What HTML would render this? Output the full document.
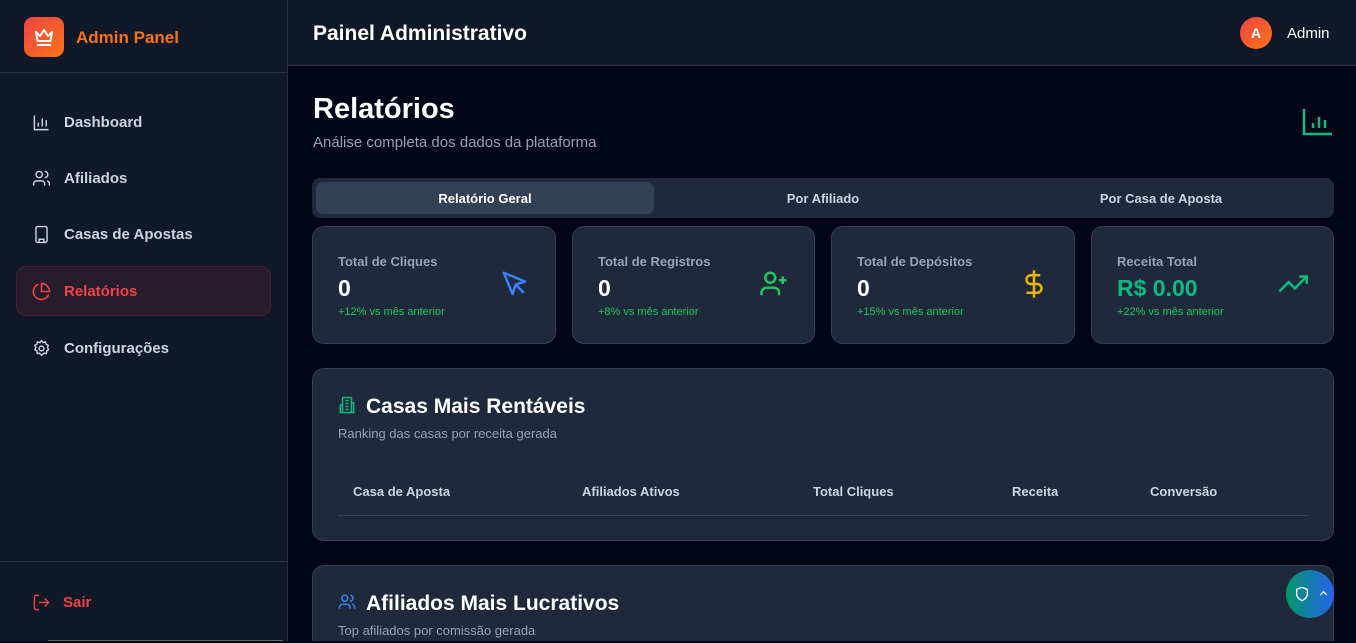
<!DOCTYPE html>
<html style="width:1356px;height:643px;overflow:hidden"><head><meta charset="utf-8"><style>
*{box-sizing:border-box;margin:0;padding:0}
body{width:1356px;height:643px;overflow:hidden;background:#020617;font-family:"Liberation Sans",sans-serif;color:#e2e8f0;position:relative}
.abs{position:absolute}
.side{left:0;top:0;width:288px;height:643px;background:#111827;border-right:1px solid #273244}
.hdr{left:288px;top:0;width:1068px;height:66px;background:#111827;border-bottom:1px solid #2b3545}
.nav{position:absolute;left:32px;font-size:15px;font-weight:bold;color:#cbd5e1;display:flex;align-items:center;gap:13px}
.nav svg{width:19px;height:19px}
.card{position:absolute;background:#1e293b;border:1px solid #334155;border-radius:12px}
.lbl{position:absolute;left:25px;top:27px;font-size:13px;color:#94a3b8;font-weight:bold}
.val{position:absolute;left:25px;top:48px;font-size:23px;font-weight:bold;color:#fff}
.sub{position:absolute;left:25px;top:79px;font-size:11px;color:#22c55e}
.ic{position:absolute;right:25px;top:42px;width:30px;height:30px}
.th{position:absolute;top:115px;font-size:13px;font-weight:bold;color:#cbd5e1}
</style></head><body>
<div class="abs" style="left:0;top:0;width:1356px;height:1px;background:#555"></div>
<div class="abs side">
 <div class="abs" style="left:24px;top:17px;width:40px;height:40px;border-radius:9px;background:linear-gradient(135deg,#ef4444,#f97316)">
  <svg viewBox="0 0 24 24" width="24" height="24" style="margin:8px" fill="none" stroke="#fff" stroke-width="2" stroke-linejoin="round"><path d="M4 7l4 4 4-6 4 6 4-4-1.5 9h-13z"/><path d="M5 20h14"/></svg>
 </div>
 <div class="abs" style="left:76px;top:28px;font-size:17px;font-weight:bold;color:#f97316">Admin Panel</div>
 <div class="abs" style="left:0;top:72px;width:287px;height:1px;background:#2b3545"></div>
 <div class="nav" style="top:113px"><svg viewBox="0 0 24 24" fill="none" stroke="#cbd5e1" stroke-width="1.8"><path d="M3 3v18h18M8 17v-5M13 17V7M18 17v-8"/></svg>Dashboard</div>
 <div class="nav" style="top:169px"><svg viewBox="0 0 24 24" fill="none" stroke="#cbd5e1" stroke-width="1.8"><circle cx="9" cy="7" r="4"/><path d="M2 21v-2a4 4 0 014-4h6a4 4 0 014 4v2M16 3a4 4 0 010 8M22 21v-2a4 4 0 00-3-3.9"/></svg>Afiliados</div>
 <div class="nav" style="top:225px"><svg viewBox="0 0 24 24" fill="none" stroke="#cbd5e1" stroke-width="1.8"><rect x="5" y="2" width="14" height="20" rx="2"/><path d="M9 22v-4h6v4M9 6h.01M12 6h.01M15 6h.01M9 10h.01M12 10h.01M15 10h.01M9 14h.01M12 14h.01M15 14h.01"/></svg>Casas de Apostas</div>
 <div class="abs" style="left:16px;top:266px;width:255px;height:50px;border-radius:10px;background:#271c2c;border:1px solid #4a1f2c"></div>
 <div class="nav" style="top:282px;color:#ef4444"><svg viewBox="0 0 24 24" fill="none" stroke="#ef4444" stroke-width="2"><path d="M21 15.9A10 10 0 118 2.8"/><path d="M22 12A10 10 0 0012 2v10z"/></svg>Relatórios</div>
 <div class="nav" style="top:339px"><svg viewBox="0 0 24 24" fill="none" stroke="#cbd5e1" stroke-width="1.8"><circle cx="12" cy="12" r="3"/><path d="M12 2l2 2.5 3-.8.8 3L20.5 8 19.5 11l1.5 2.5-2.5 1.7-.3 3.1-3-.3L12 20.5 9.6 18l-3 .3-.3-3.1L3.5 13.5 5 11 3.5 8 6.2 6.7l.8-3 3 .8z"/></svg>Configurações</div>
 <div class="abs" style="left:0;top:561px;width:287px;height:1px;background:#2b3545"></div>
 <div class="nav" style="top:593px;color:#ef4444;gap:12px"><svg viewBox="0 0 24 24" fill="none" stroke="#ef4444" stroke-width="1.8"><path d="M9 21H5a2 2 0 01-2-2V5a2 2 0 012-2h4M16 17l5-5-5-5M21 12H9"/></svg>Sair</div>
 <div class="abs" style="left:48px;top:640px;width:235px;height:3px;background:#666"></div>
</div>
<div class="abs hdr">
 <div class="abs" style="left:25px;top:22px;font-size:21px;font-weight:bold;color:#fff">Painel Administrativo</div>
 <div class="abs" style="left:952px;top:17px;width:32px;height:32px;border-radius:50%;background:linear-gradient(135deg,#ef4444,#f97316);color:#fff;font-weight:bold;font-size:14px;text-align:center;line-height:32px">A</div>
 <div class="abs" style="left:999px;top:25px;font-size:15px;color:#fff">Admin</div>
</div>
<div class="abs" style="left:313px;top:93px;font-size:29px;font-weight:bold;color:#fff">Relatórios</div>
<div class="abs" style="left:313px;top:134px;font-size:15px;color:#94a3b8">Análise completa dos dados da plataforma</div>
<svg class="abs" style="left:1302px;top:108px" width="30" height="28" viewBox="0 0 30 28" fill="none" stroke="#10b981" stroke-width="2.5"><path d="M2 1v25h28M11 20v-5M17 20V9M23 20v-8"/></svg>
<div class="abs" style="left:312px;top:178px;width:1022px;height:40px;border-radius:8px;background:#1e293b"></div>
<div class="abs" style="left:316px;top:182px;width:338px;height:32px;border-radius:7px;background:#334155"></div>
<div class="abs" style="left:316px;top:191px;width:338px;text-align:center;font-size:13px;font-weight:bold;color:#fff">Relatório Geral</div>
<div class="abs" style="left:654px;top:191px;width:338px;text-align:center;font-size:13px;font-weight:bold;color:#cbd5e1">Por Afiliado</div>
<div class="abs" style="left:992px;top:191px;width:338px;text-align:center;font-size:13px;font-weight:bold;color:#cbd5e1">Por Casa de Aposta</div>

<div class="card" style="left:312px;top:226px;width:244px;height:118px"><div class="lbl">Total de Cliques</div><div class="val">0</div><div class="sub">+12% vs mês anterior</div>
<svg class="ic" viewBox="0 0 24 24" fill="none" stroke="#3b82f6" stroke-width="2" stroke-linejoin="round"><path d="M3 3l7 17 2.5-7.5L20 10zM13 13l6 6"/></svg></div>
<div class="card" style="left:572px;top:226px;width:243px;height:118px"><div class="lbl">Total de Registros</div><div class="val">0</div><div class="sub">+8% vs mês anterior</div>
<svg class="ic" viewBox="0 0 24 24" fill="none" stroke="#22c55e" stroke-width="2"><circle cx="9" cy="7" r="4"/><path d="M2 21v-2a4 4 0 014-4h6a4 4 0 014 4v2M19 6v6M16 9h6"/></svg></div>
<div class="card" style="left:831px;top:226px;width:244px;height:118px"><div class="lbl">Total de Depósitos</div><div class="val">0</div><div class="sub">+15% vs mês anterior</div>
<svg class="ic" viewBox="0 0 24 24" fill="none" stroke="#eab308" stroke-width="2"><path d="M12 1v22M17 5H9.5a3.5 3.5 0 000 7h5a3.5 3.5 0 010 7H6"/></svg></div>
<div class="card" style="left:1091px;top:226px;width:243px;height:118px"><div class="lbl">Receita Total</div><div class="val" style="color:#10b981">R$ 0.00</div><div class="sub">+22% vs mês anterior</div>
<svg class="ic" viewBox="0 0 24 24" fill="none" stroke="#10b981" stroke-width="2"><path d="M23 6l-9.5 9.5-5-5L1 18M17 6h6v6"/></svg></div>

<div class="card" style="left:312px;top:368px;width:1022px;height:173px">
 <svg class="abs" style="left:25px;top:27px" width="18" height="18" viewBox="0 0 24 24" fill="none" stroke="#10b981" stroke-width="2"><rect x="6" y="2" width="12" height="20" rx="1"/><path d="M6 12H3v10h3M18 9h3v13h-3M10 6h4M10 10h4M10 14h4M10 18h4"/></svg>
 <div class="abs" style="left:53px;top:26px;font-size:21px;font-weight:bold;color:#fff">Casas Mais Rentáveis</div>
 <div class="abs" style="left:25px;top:57px;font-size:13px;color:#94a3b8">Ranking das casas por receita gerada</div>
 <div class="th" style="left:40px">Casa de Aposta</div>
 <div class="th" style="left:269px">Afiliados Ativos</div>
 <div class="th" style="left:500px">Total Cliques</div>
 <div class="th" style="left:699px">Receita</div>
 <div class="th" style="left:837px">Conversão</div>
 <div class="abs" style="left:25px;top:146px;width:971px;height:1px;background:#334155"></div>
</div>
<div class="card" style="left:312px;top:565px;width:1022px;height:90px;border-bottom:none;border-bottom-left-radius:0;border-bottom-right-radius:0">
 <svg class="abs" style="left:25px;top:27px" width="18" height="18" viewBox="0 0 24 24" fill="none" stroke="#3b82f6" stroke-width="2"><circle cx="9" cy="7" r="4"/><path d="M2 21v-2a4 4 0 014-4h6a4 4 0 014 4v2M16 3a4 4 0 010 8M22 21v-2a4 4 0 00-3-3.9"/></svg>
 <div class="abs" style="left:53px;top:26px;font-size:21px;font-weight:bold;color:#fff">Afiliados Mais Lucrativos</div>
 <div class="abs" style="left:25px;top:57px;font-size:13px;color:#94a3b8">Top afiliados por comissão gerada</div>
</div>
<div class="abs" style="left:1286px;top:570px;width:48px;height:48px;border-radius:24px;background:linear-gradient(90deg,#059669,#2563eb)">
 <svg class="abs" style="left:8px;top:15px" width="16" height="18" viewBox="0 0 24 24" fill="none" stroke="#fff" stroke-width="2"><path d="M12 2l8 3v7c0 5-4 8-8 10-4-2-8-5-8-10V5z"/></svg>
 <svg class="abs" style="left:32px;top:18px" width="11" height="11" viewBox="0 0 24 24" fill="none" stroke="#fff" stroke-width="3"><path d="M5 15l7-7 7 7"/></svg>
</div>
<div class="abs" style="left:0;top:641px;width:1356px;height:2px;background:#020617"></div>
</body></html>
